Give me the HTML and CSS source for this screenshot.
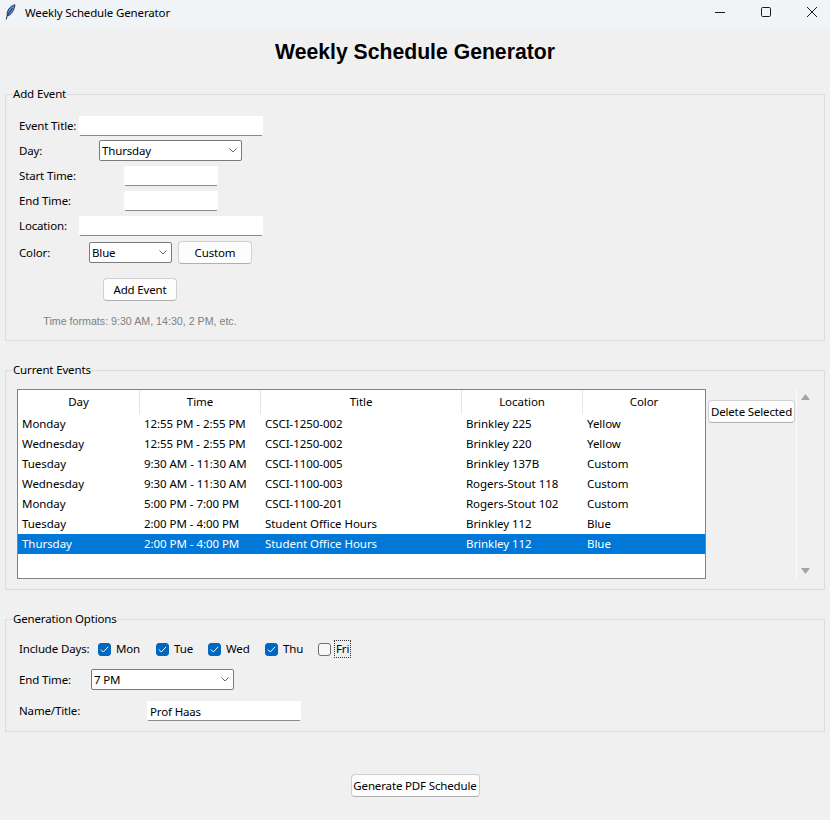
FILE: index.html
```html
<!DOCTYPE html>
<html lang="en">
<head>
<meta charset="utf-8">
<title>Weekly Schedule Generator</title>
<link rel="stylesheet" href="styles.css">
</head>
<body>
<header class="titlebar">
  <svg class="feather" width="11" height="16" viewBox="0 0 11 16"><path d="M10 0.8C6 1.500 2.800 5 2 9.500L2.600 12C6 11 9 7 10 .8Z" fill="#5b8fd6" stroke="#1c2c48" stroke-width=".9"/><path d="M7.500 4L2.200 11.500L1.200 15.500" fill="none" stroke="#1c2c48" stroke-width="1"/></svg>
  <span class="titlebar-text">Weekly Schedule Generator</span>
  <div class="controls">
    <svg width="12" height="12" viewBox="0 0 12 12"><path d="M1 6.500H11" stroke="#1a1a1a" fill="none"/></svg>
    <svg width="12" height="12" viewBox="0 0 12 12"><rect x="1.500" y="1.500" width="9" height="9" rx="1.200" stroke="#1a1a1a" fill="none"/></svg>
    <svg width="12" height="12" viewBox="0 0 12 12"><path d="M1 1L11 11M11 1L1 11" stroke="#1a1a1a" fill="none"/></svg>
  </div>
</header>
<main class="app">
  <h1 class="heading">Weekly Schedule Generator</h1>

  <fieldset class="group group-add">
    <legend>Add Event</legend>
    <div class="add-grid">
      <label class="lbl">Event Title:</label>
      <input class="entry entry-wide" type="text">
      <label class="lbl lbl-combo">Day:</label>
      <div class="combo combo-day"><span>Thursday</span><svg class="chev" width="8" height="5" viewBox="0 0 8 5"><path d="M.5 .5L4 4L7.500 .5" fill="none" stroke="#666"/></svg></div>
      <label class="lbl">Start Time:</label>
      <input class="entry entry-time" type="text">
      <label class="lbl">End Time:</label>
      <input class="entry entry-time" type="text">
      <label class="lbl">Location:</label>
      <input class="entry entry-wide" type="text">
      <label class="lbl lbl-color">Color:</label>
      <div class="color-row">
        <div class="combo combo-color"><span>Blue</span><svg class="chev" width="8" height="5" viewBox="0 0 8 5"><path d="M.5 .5L4 4L7.500 .5" fill="none" stroke="#666"/></svg></div>
        <button class="btn btn-custom">Custom</button>
      </div>
      <button class="btn btn-add">Add Event</button>
      <p class="hint">Time formats: 9:30 AM, 14:30, 2 PM, etc.</p>
    </div>
  </fieldset>

  <fieldset class="group group-events">
    <legend>Current Events</legend>
    <div class="events-row">
      <div class="tree">
        <table>
          <colgroup><col class="c-day"><col class="c-time"><col class="c-title"><col class="c-loc"><col class="c-color"></colgroup>
          <thead><tr><th>Day</th><th>Time</th><th>Title</th><th>Location</th><th>Color</th></tr></thead>
          <tbody>
            <tr><td>Monday</td><td>12:55 PM - 2:55 PM</td><td>CSCI-1250-002</td><td>Brinkley 225</td><td>Yellow</td></tr>
            <tr><td>Wednesday</td><td>12:55 PM - 2:55 PM</td><td>CSCI-1250-002</td><td>Brinkley 220</td><td>Yellow</td></tr>
            <tr><td>Tuesday</td><td>9:30 AM - 11:30 AM</td><td>CSCI-1100-005</td><td>Brinkley 137B</td><td>Custom</td></tr>
            <tr><td>Wednesday</td><td>9:30 AM - 11:30 AM</td><td>CSCI-1100-003</td><td>Rogers-Stout 118</td><td>Custom</td></tr>
            <tr><td>Monday</td><td>5:00 PM - 7:00 PM</td><td>CSCI-1100-201</td><td>Rogers-Stout 102</td><td>Custom</td></tr>
            <tr><td>Tuesday</td><td>2:00 PM - 4:00 PM</td><td>Student Office Hours</td><td>Brinkley 112</td><td>Blue</td></tr>
            <tr class="selected"><td>Thursday</td><td>2:00 PM - 4:00 PM</td><td>Student Office Hours</td><td>Brinkley 112</td><td>Blue</td></tr>
          </tbody>
        </table>
      </div>
      <button class="btn btn-delete">Delete Selected</button>
      <div class="scrollbar">
        <svg width="9" height="6" viewBox="0 0 9 6"><path d="M4.500 0L9 6H0Z" fill="#a3a3a3"/></svg>
        <svg width="9" height="6" viewBox="0 0 9 6"><path d="M0 0H9L4.500 6Z" fill="#a3a3a3"/></svg>
      </div>
    </div>
  </fieldset>

  <fieldset class="group group-options">
    <legend>Generation Options</legend>
    <div class="options">
      <div class="days">
        <span class="days-label">Include Days:</span>
        <span class="check check-mon"><span class="box on"><svg width="9" height="7" viewBox="0 0 9 7"><path d="M.8 3.500L3.300 6L8.200 .8" fill="none" stroke="#fff"/></svg></span>Mon</span>
        <span class="check check-tue"><span class="box on"><svg width="9" height="7" viewBox="0 0 9 7"><path d="M.8 3.500L3.300 6L8.200 .8" fill="none" stroke="#fff"/></svg></span>Tue</span>
        <span class="check check-wed"><span class="box on"><svg width="9" height="7" viewBox="0 0 9 7"><path d="M.8 3.500L3.300 6L8.200 .8" fill="none" stroke="#fff"/></svg></span>Wed</span>
        <span class="check check-thu"><span class="box on"><svg width="9" height="7" viewBox="0 0 9 7"><path d="M.8 3.500L3.300 6L8.200 .8" fill="none" stroke="#fff"/></svg></span>Thu</span>
        <span class="check check-fri"><span class="box"></span><span class="focus">Fri</span></span>
      </div>
      <div class="opt-row opt-end">
        <label class="opt-label-end">End Time:</label>
        <div class="combo combo-end"><span>7 PM</span><svg class="chev" width="8" height="5" viewBox="0 0 8 5"><path d="M.5 .5L4 4L7.500 .5" fill="none" stroke="#666"/></svg></div>
      </div>
      <div class="opt-row opt-name">
        <label class="opt-label-name">Name/Title:</label>
        <input class="entry entry-name" type="text" value="Prof Haas">
      </div>
    </div>
  </fieldset>

  <div class="footer"><button class="btn btn-generate">Generate PDF Schedule</button></div>
</main>
</body>
</html>
```
FILE: styles.css
```css
* { box-sizing: border-box; }
html, body { margin: 0; padding: 0; }
body {
  width: 830px;
  height: 820px;
  overflow: hidden;
  background: #f0f0f0;
  color: #000;
  font-family: "Noto Sans", "Open Sans", sans-serif;
  font-size: 11.500px;
  line-height: 16px;
  letter-spacing: -0.150px;
  white-space: nowrap;
}
.titlebar {
  height: 27px;
  background: #f0f4f7;
  display: flex;
  align-items: center;
  padding-left: 5px;
}
.feather { flex: none; margin-top: -3px; }
.titlebar-text { margin-left: 9px; margin-top: -1px; }
.controls {
  margin-left: auto;
  display: flex;
  gap: 34px;
  padding-right: 12px;
  margin-top: -3px;
}
.app { padding: 0 5px; }
.heading {
  margin: 13px 0 22px;
  font: bold 21.200px/24px "Liberation Sans", Arial, sans-serif;
  letter-spacing: 0;
  text-align: center;
}
.group {
  margin: 0;
  padding: 0;
  min-width: 0;
  border: 1px solid #dcdcdc;
  width: 820px;
}
.group legend { margin-left: 7px; padding: 0; }
.group-add { height: 255px; }
.group-events { height: 228px; margin-top: 21px; }
.group-options { height: 121px; margin-top: 21px; }

.add-grid {
  display: grid;
  grid-template-columns: 59px 185px;
  grid-template-rows: 24px 26px 25px 25px 25px 37px 36px auto;
  padding: 14px 0 0 13px;
  align-items: start;
  justify-items: start;
}
.lbl { line-height: 20px; }
.lbl-combo { line-height: 21px; }
.lbl-color { line-height: 23px; }
.entry {
  display: block;
  height: 20px;
  margin: 0;
  padding: 0 2px;
  background: #fff;
  border: 1px solid #fff;
  border-bottom-color: #8a8a8a;
  border-radius: 2px;
  font: inherit;
  letter-spacing: inherit;
  outline: none;
}
.entry-wide { width: 184px; margin-left: 1px; }
.entry-time { width: 94px; justify-self: center; margin-left: 1px; }
.combo {
  height: 21px;
  display: flex;
  align-items: center;
  justify-content: space-between;
  padding: 0 4px 0 2px;
  background: #fff;
  border: 1px solid #7a7a7a;
  border-radius: 2px;
}
.combo-day { width: 143px; justify-self: center; }
.combo-color { width: 83px; }
.combo-end { width: 143px; }
.color-row {
  display: flex;
  align-items: center;
  gap: 6px;
  height: 23px;
  justify-self: center;
}
.btn {
  margin: 0;
  padding: 0;
  height: 23px;
  background: #fdfdfd;
  border: 1px solid #d0d0d0;
  border-bottom-color: #b0b0b0;
  border-radius: 4px;
  font: inherit;
  letter-spacing: inherit;
  color: #000;
  white-space: nowrap;
}
.btn-custom { width: 74px; }
.btn-add {
  grid-column: 1 / 3;
  justify-self: center;
  width: 74px;
  margin-right: 2px;
}
.hint {
  grid-column: 1 / 3;
  justify-self: center;
  margin: 0 2px 0 0;
  font: 10.670px/14px "Liberation Sans", Arial, sans-serif;
  letter-spacing: 0;
  color: #808080;
}

.events-row {
  display: flex;
  align-items: flex-start;
  padding: 11px 0 0 11px;
}
.tree {
  width: 689px;
  height: 190px;
  flex: none;
  background: #fff;
  border: 1px solid #82828a;
  letter-spacing: -0.050px;
}
.tree table {
  border-collapse: separate;
  border-spacing: 0;
  table-layout: fixed;
  width: 687px;
}
.c-day { width: 122px; }
.c-time { width: 121px; }
.c-title { width: 201px; }
.c-loc { width: 121px; }
.c-color { width: 122px; }
th {
  height: 24px;
  padding: 0;
  font-weight: normal;
  text-align: center;
  border-right: 1px solid #e6e6e6;
}
th:last-child { border-right: none; }
td {
  height: 20px;
  padding: 0 0 0 4px;
}
.selected td { background: #0078d7; color: #fff; }
.btn-delete {
  flex: none;
  width: 87px;
  margin: 11px 0 0 2px;
}
.scrollbar {
  flex: none;
  width: 18px;
  height: 190px;
  margin-left: 1px;
  border-left: 1px solid #fafafa;
  display: flex;
  flex-direction: column;
  align-items: center;
  justify-content: space-between;
  padding: 5px 0 5px;
}

.options { padding: 13px 0 0 13px; }
.days {
  display: flex;
  align-items: center;
  height: 16px;
  margin-top: 1px;
}
.days-label { width: 79px; }
.check { display: flex; align-items: center; }
.box {
  width: 13px;
  height: 13px;
  margin-right: 5px;
  border-radius: 3px;
  border: 1px solid #6e6e6e;
  background: #f8f8f8;
  display: flex;
  align-items: center;
  justify-content: center;
}
.box.on { background: #0067c0; border-color: #0067c0; }
.check-mon { width: 58px; }
.check-tue { width: 52px; }
.check-wed { width: 57px; }
.check-thu { width: 53px; }
.focus { outline: 1px dotted #333; margin-left: -1px; padding: 0 1px; }
.opt-row { display: flex; align-items: center; }
.opt-end { margin-top: 12px; }
.opt-label-end { width: 72px; }
.opt-name { margin-top: 11px; }
.opt-label-name { width: 128px; }
.entry-name { width: 154px; }

.footer { display: flex; justify-content: center; margin-top: 42px; }
.btn-generate { width: 129px; }
```
